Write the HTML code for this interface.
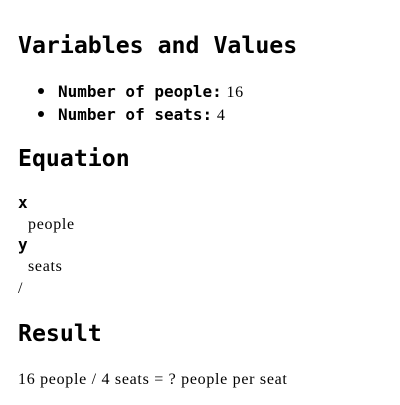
<!DOCTYPE html>
<html><head><style>
body{margin:0;width:400px;height:405px;background:#fff;color:#000;position:relative;font-family:"Liberation Serif",serif;font-size:16px}
.a{position:absolute;white-space:nowrap;line-height:20px}
.s{letter-spacing:0.7px}
.h{font-family:"DejaVu Sans Mono","Liberation Mono",monospace;font-weight:bold;font-size:23.2px;line-height:30px;letter-spacing:0}
.m{font-family:"DejaVu Sans Mono","Liberation Mono",monospace;font-weight:bold;font-size:16px;letter-spacing:0}
.dot{position:absolute;width:6px;height:6px;border-radius:50%;background:#000}
</style></head><body>
<div class="a h" style="left:18px;top:31px">Variables and Values</div>
<div class="dot" style="left:38px;top:88px"></div>
<div class="a s" style="left:58px;top:82px"><span class="m">Number of people:</span> 16</div>
<div class="dot" style="left:38px;top:111px"></div>
<div class="a s" style="left:58px;top:105px"><span class="m">Number of seats:</span> 4</div>
<div class="a h" style="left:18px;top:144px">Equation</div>
<div class="a m" style="left:18px;top:193px">x</div>
<div class="a s" style="left:28px;top:215px">people</div>
<div class="a m" style="left:18px;top:235px">y</div>
<div class="a s" style="left:28px;top:257px">seats</div>
<div class="a" style="left:18px;top:279px">/</div>
<div class="a h" style="left:18px;top:319px">Result</div>
<div class="a s" style="left:18px;top:370px">16 people / 4 seats = ? people per seat</div>
</body></html>
